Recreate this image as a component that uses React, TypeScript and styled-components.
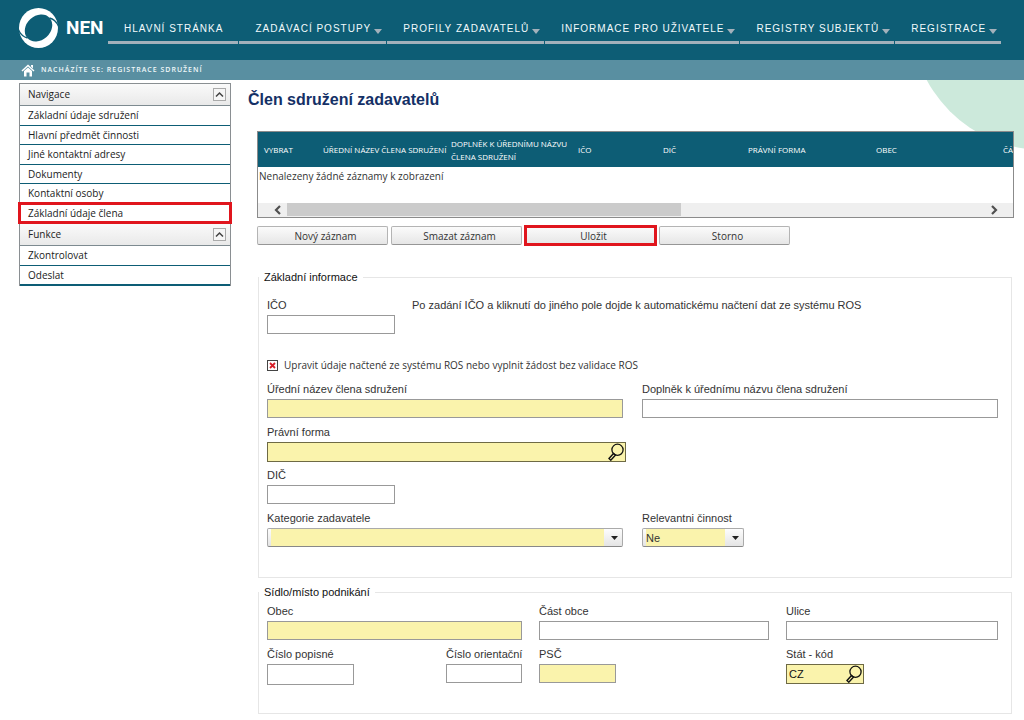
import React from "react";
import styled, { createGlobalStyle, css } from "styled-components";

const TEAL = "#0d5d75";
const RED = "#e0151d";
const ARIAL = '"Liberation Sans", Arial, sans-serif';
const HUMAN = '"Open Sans", "Noto Sans", sans-serif';

const GlobalStyle = createGlobalStyle`
  *, *::before, *::after { box-sizing: border-box; }
  body { margin: 0; background: #fff; color: #333; font: 11px/16px ${ARIAL}; }
  button, input, select { font: inherit; color: inherit; margin: 0; border-radius: 0; }
`;

const Page = styled.div`
  display: flex;
  flex-direction: column;
`;

const Header = styled.header`
  display: flex;
  align-items: flex-start;
  height: 60px;
  padding-left: 18px;
  background: ${TEAL};
`;

const Brand = styled.a`
  display: flex;
  align-items: center;
  gap: 7px;
  width: 90px;
  padding-top: 7px;
  color: #fff;
  font: bold 19px/42px Roboto, sans-serif;
  text-decoration: none;
`;

const Menu = styled.ul`
  display: flex;
  gap: 1px;
  margin: 0;
  padding: 0;
  list-style: none;
`;

const MenuLink = styled.a<{ $plain?: boolean }>`
  display: flex;
  align-items: center;
  gap: 3px;
  height: 44px;
  padding: 17px ${(p) => (p.$plain ? 15 : 4)}px 0 16px;
  border-bottom: 3px solid #a3b1bb;
  color: #f2fafc;
  font-size: 10px;
  letter-spacing: 1px;
  white-space: nowrap;
  text-decoration: none;

  svg { margin-top: 5px; }
`;

const Crumbs = styled.nav`
  display: flex;
  align-items: center;
  gap: 6px;
  height: 20px;
  padding-left: 21px;
  background: #598fa1;
  color: #f0f8fa;
  font: 600 7px/20px ${HUMAN};
  letter-spacing: 1px;
`;

const Content = styled.div`
  position: relative;
  display: flex;
  align-items: flex-start;
  gap: 17px;
  padding: 3px 10px 6px 19px;
  overflow: hidden;
`;

const Bubble = styled.div`
  position: absolute;
  top: -195px;
  right: -152px;
  width: 265px;
  height: 265px;
  border-radius: 50%;
  background: #cce9db;
`;

const Sidebar = styled.aside`
  flex: none;
  width: 212px;
  border: 1px solid #8a8f92;
  border-bottom: 0;
  color: #222;
  font: 10px/18px ${HUMAN};
`;

const PanelHead = styled.h2`
  display: flex;
  align-items: center;
  justify-content: space-between;
  height: 22px;
  margin: 0;
  padding: 0 4px 1px 8px;
  border-bottom: 1px solid #7d8a90;
  background: linear-gradient(#fafafa, #e9e9e9);
  font: inherit;
`;

const Collapse = styled.button`
  display: grid;
  place-items: center;
  width: 13px;
  height: 13px;
  padding: 0;
  border: 1px solid #aaa;
  background: #f6f6f6;
`;

const PanelList = styled.ul<{ $height: number }>`
  display: grid;
  grid-auto-rows: 1fr;
  min-height: ${(p) => p.$height}px;
  margin: 0;
  padding: 0;
  list-style: none;
  border-bottom: 1px solid ${TEAL};
`;

const PanelItem = styled.li`
  display: grid;
  border-bottom: 1px solid ${TEAL};
`;

const PanelLink = styled.a<{ $marked?: boolean }>`
  display: flex;
  align-items: center;
  padding-left: 8px;
  color: inherit;
  text-decoration: none;
  ${(p) => p.$marked && css`outline: 3px solid ${RED}; outline-offset: -1px;`}
`;

const Main = styled.main`
  position: relative;
  flex: 1;
  min-width: 0;
`;

const Title = styled.h1`
  margin: 0 0 21px;
  padding-top: 7px;
  color: #143066;
  font-size: 16px;
  line-height: 20px;
`;

const Body = styled.div`
  margin-left: 9px;
`;

const GridBox = styled.div`
  border: 1px solid #8b8b8b;
  background: #fff;
  overflow: hidden;
`;

const DataTable = styled.table`
  width: 100%;
  min-width: 754px;
  table-layout: fixed;
  border-collapse: collapse;
`;

const HeadCell = styled.th<{ $width?: number }>`
  width: ${(p) => (p.$width ? `${p.$width}px` : "auto")};
  height: 35px;
  padding: 0 0 0 6px;
  background: ${TEAL};
  color: #fff;
  font: 8px/13px ${HUMAN};
  text-align: left;
  white-space: pre;
`;

const EmptyCell = styled.td`
  height: 36px;
  padding: 0 1px;
  vertical-align: top;
  font: 10px/18px ${HUMAN};
`;

const ScrollBar = styled.div`
  display: flex;
  height: 14px;
  padding: 0 9px;
  background: #efefef;
`;

const ScrollButton = styled.button`
  display: grid;
  place-items: center;
  width: 20px;
  padding: 0;
  border: 0;
  background: transparent;
`;

const ScrollTrack = styled.div`
  display: grid;
  flex: 1;
  grid-template-columns: 393fr 302fr;
`;

const ScrollThumb = styled.div`
  height: 13px;
  background: #cbcbcb;
`;

const Actions = styled.div`
  display: flex;
  gap: 3px;
  margin-top: 8px;
`;

const ActionButton = styled.button<{ $marked?: boolean }>`
  width: 131px;
  height: 19px;
  padding: 0 0 0 6px;
  border: 1px solid #b4b4b4;
  border-bottom-color: #969696;
  border-radius: 2px;
  background: linear-gradient(#fbfbfb, #e6e6e6);
  font: 10px/16px ${HUMAN};
  ${(p) => p.$marked && css`
    border-radius: 0;
    outline: 3px solid ${RED};
    outline-offset: -2px;
  `}
`;

const Groups = styled.div`
  display: flex;
  flex-direction: column;
  gap: 6px;
  margin-top: 24px;
`;

const Group = styled.fieldset<{ $top: number; $bottom: number }>`
  min-width: 0;
  margin: 0 2px 0 1px;
  padding: ${(p) => p.$top}px 13px ${(p) => p.$bottom}px 8px;
  border: 1px solid #e6e6e6;
`;

const Legend = styled.legend`
  margin-left: -8px;
  padding: 0 5px;
  color: #111;
`;

const Intro = styled.div`
  display: flex;
  align-items: flex-start;
  gap: 17px;
`;

const Columns = styled.div<{ $cols: string; $gap: number }>`
  display: grid;
  grid-template-columns: ${(p) => p.$cols};
  gap: 6px ${(p) => p.$gap}px;
`;

const Field = styled.div<{ $width?: number; $start?: boolean }>`
  display: flex;
  flex-direction: column;
  gap: 2px;
  width: ${(p) => (p.$width ? `${p.$width}px` : "auto")};
  ${(p) => p.$start && css`grid-column: 1;`}

  label { white-space: nowrap; }
`;

const Split = styled.div`
  display: flex;
  justify-content: space-between;
`;

const fill = (required?: boolean) => (required ? "#faf3ac" : "#fff");

const TextBox = styled.input<{ $required?: boolean; $tall?: boolean }>`
  width: 100%;
  height: ${(p) => (p.$tall ? 21 : 19)}px;
  padding: 0 4px;
  border: 1px solid #999;
  background: ${(p) => fill(p.$required)};
`;

const LookupBox = styled.div<{ $wide?: boolean }>`
  display: flex;
  height: 20px;
  margin: 0 ${(p) => (p.$wide ? -3 : 0)}px -1px 0;
  border: 1px solid #6e6a45;
  background: ${fill(true)};

  input {
    flex: 1;
    min-width: 0;
    padding: 0 2px;
    border: 0;
    background: transparent;
    color: #111;
  }
  button {
    display: grid;
    place-items: center;
    width: 18px;
    padding: 0;
    border: 0;
    background: transparent;
  }
`;

const SelectBox = styled.div`
  display: grid;
  align-items: center;
  border: 1px solid #aaa;
  border-bottom-color: #888;
  border-radius: 2px;
  background: linear-gradient(#fdfdfd, #e4e4e4);

  select, svg { grid-area: 1 / 1; }
  select {
    appearance: none;
    height: 17px;
    margin: 0 18px 0 3px;
    padding: 0;
    border: 0;
    background: ${fill(true)};
  }
  svg { justify-self: end; margin-right: 4px; pointer-events: none; }
`;

const CheckRow = styled.label`
  display: flex;
  align-items: center;
  gap: 6px;
  margin: 23px 0 8px;
  font: 10px/16px ${HUMAN};
`;

const CheckMark = styled.span`
  display: grid;
  place-items: center;

  input, svg { grid-area: 1 / 1; }
  input {
    appearance: none;
    width: 11px;
    height: 11px;
    border: 1px solid #444;
    background: #fff;
  }
  svg { visibility: hidden; pointer-events: none; }
  input:checked + svg { visibility: visible; }
`;

const Hint = styled.p`
  margin: 0;
`;

const Logo = () => (
  <svg width="41" height="42" viewBox="0 0 41 42" aria-hidden="true">
    <ellipse cx="20.500" cy="21" rx="19.500" ry="20" fill="#fff" />
    <ellipse cx="20.500" cy="21" rx="15" ry="12" fill={TEAL} transform="rotate(-42 20.500 21)" />
    <path
      fill="none"
      stroke={TEAL}
      strokeWidth="1.300"
      d="M9.500 31C5.500 30 2.500 27 .5 23M31.500 11C35.500 12 38.500 15 40.500 19"
    />
  </svg>
);

const Home = () => (
  <svg width="14" height="13" viewBox="0 0 14 13" fill="none" aria-hidden="true">
    <path d="M1 7l6-5.500 6 5.500" stroke="#fff" strokeWidth="1.500" />
    <path d="M10 1h2v3.500l-2-2zM3 7l4-3.500 4 3.500v5.500H8.500V8.500h-3v4H3z" fill="#fff" />
  </svg>
);

const MenuArrow = () => (
  <svg width="8" height="5" viewBox="0 0 8 5" aria-hidden="true">
    <path d="M0 0h8L4 5z" fill="#a3b1bb" />
  </svg>
);

const ChevronUp = () => (
  <svg width="9" height="7" viewBox="0 0 9 7" aria-hidden="true">
    <path d="M1 5.500L4.500 2 8 5.500" fill="none" stroke="#444" strokeWidth="1.500" />
  </svg>
);

const ScrollArrow = ({ d }: { d: string }) => (
  <svg width="9" height="10" viewBox="0 0 9 10" aria-hidden="true">
    <path d={d} fill="none" stroke="#505050" strokeWidth="2.200" />
  </svg>
);

const DropArrow = () => (
  <svg width="7" height="4" viewBox="0 0 7 4" aria-hidden="true">
    <path d="M0 0h7L3.500 4z" fill="#222" />
  </svg>
);

const Magnifier = () => (
  <svg width="16" height="18" viewBox="0 0 16 18" fill="none" stroke="#111" aria-hidden="true">
    <circle cx="9.500" cy="6.800" r="5.600" strokeWidth="1.300" />
    <path d="M5.500 10.500L1 15.500l1.800 1.700L7.500 12z" strokeWidth="1.400" />
  </svg>
);

const menu = [
  { text: "HLAVNÍ STRÁNKA", sub: false },
  { text: "ZADÁVACÍ POSTUPY", sub: true },
  { text: "PROFILY ZADAVATELŮ", sub: true },
  { text: "INFORMACE PRO UŽIVATELE", sub: true },
  { text: "REGISTRY SUBJEKTŮ", sub: true },
  { text: "REGISTRACE", sub: true },
];

const panels = [
  {
    title: "Navigace",
    height: 118,
    items: [
      "Základní údaje sdružení",
      "Hlavní předmět činnosti",
      "Jiné kontaktní adresy",
      "Dokumenty",
      "Kontaktní osoby",
      "Základní údaje člena",
    ],
  },
  { title: "Funkce", height: 40, items: ["Zkontrolovat", "Odeslat"] },
];

const columns = [
  { text: "VYBRAT", width: 59 },
  { text: "ÚŘEDNÍ NÁZEV ČLENA SDRUŽENÍ", width: 128 },
  { text: "DOPLNĚK K ÚŘEDNÍMU NÁZVU\nČLENA SDRUŽENÍ", width: 127 },
  { text: "IČO", width: 85 },
  { text: "DIČ", width: 85 },
  { text: "PRÁVNÍ FORMA", width: 128 },
  { text: "OBEC", width: 127 },
  { text: "ČÁ" },
];

const LabeledText = ({ id, label, width, required, tall }: {
  id: string; label: string; width?: number; required?: boolean; tall?: boolean;
}) => (
  <Field $width={width}>
    <label htmlFor={id}>{label}</label>
    <TextBox id={id} $required={required} $tall={tall} />
  </Field>
);

const Lookup = ({ id, label, width, value, wide }: {
  id: string; label: string; width?: number; value?: string; wide?: boolean;
}) => (
  <Field $width={width} $start={wide}>
    <label htmlFor={id}>{label}</label>
    <LookupBox $wide={wide}>
      <input id={id} defaultValue={value} />
      <button type="button" aria-label={label}><Magnifier /></button>
    </LookupBox>
  </Field>
);

const Choice = ({ id, label, width, options }: {
  id: string; label: string; width?: number; options: string[];
}) => (
  <Field $width={width}>
    <label htmlFor={id}>{label}</label>
    <SelectBox>
      <select id={id}>
        {options.map((o) => <option key={o}>{o}</option>)}
      </select>
      <DropArrow />
    </SelectBox>
  </Field>
);

export default function App() {
  return (
    <Page>
      <GlobalStyle />
      <Header>
        <Brand href="#"><Logo />NEN</Brand>
        <nav>
          <Menu>
            {menu.map(({ text, sub }) => (
              <li key={text}>
                <MenuLink href="#" $plain={!sub}>{text}{sub && <MenuArrow />}</MenuLink>
              </li>
            ))}
          </Menu>
        </nav>
      </Header>
      <Crumbs><Home />NACHÁZÍTE SE: REGISTRACE SDRUŽENÍ</Crumbs>
      <Content>
        <Bubble />
        <Sidebar>
          {panels.map((panel) => (
            <section key={panel.title}>
              <PanelHead>
                {panel.title}
                <Collapse type="button" aria-label={panel.title}><ChevronUp /></Collapse>
              </PanelHead>
              <PanelList $height={panel.height}>
                {panel.items.map((item) => (
                  <PanelItem key={item}>
                    <PanelLink href="#" $marked={item === "Základní údaje člena"}>{item}</PanelLink>
                  </PanelItem>
                ))}
              </PanelList>
            </section>
          ))}
        </Sidebar>
        <Main>
          <Title>Člen sdružení zadavatelů</Title>
          <Body>
            <GridBox>
              <DataTable>
                <thead>
                  <tr>
                    {columns.map((c) => (
                      <HeadCell key={c.text} $width={c.width}>{c.text}</HeadCell>
                    ))}
                  </tr>
                </thead>
                <tbody>
                  <tr>
                    <EmptyCell colSpan={columns.length}>Nenalezeny žádné záznamy k zobrazení</EmptyCell>
                  </tr>
                </tbody>
              </DataTable>
              <ScrollBar>
                <ScrollButton type="button" aria-label="Doleva"><ScrollArrow d="M7 1L3 5l4 4" /></ScrollButton>
                <ScrollTrack><ScrollThumb /></ScrollTrack>
                <ScrollButton type="button" aria-label="Doprava"><ScrollArrow d="M2 1l4 4-4 4" /></ScrollButton>
              </ScrollBar>
            </GridBox>
            <Actions>
              <ActionButton type="button">Nový záznam</ActionButton>
              <ActionButton type="button">Smazat záznam</ActionButton>
              <ActionButton type="button" $marked>Uložit</ActionButton>
              <ActionButton type="button">Storno</ActionButton>
            </Actions>
            <Groups>
              <Group $top={12} $bottom={30}>
                <Legend>Základní informace</Legend>
                <Intro>
                  <LabeledText id="ico" label="IČO" width={128} />
                  <Hint>Po zadání IČO a kliknutí do jiného pole dojde k automatickému načtení dat ze systému ROS</Hint>
                </Intro>
                <CheckRow>
                  <CheckMark>
                    <input type="checkbox" defaultChecked />
                    <svg width="7" height="7" viewBox="0 0 7 7"><path d="M1 1l5 5M6 1L1 6" stroke="#d8202a" strokeWidth="1.800" /></svg>
                  </CheckMark>
                  Upravit údaje načtené ze systému ROS nebo vyplnit žádost bez validace ROS
                </CheckRow>
                <Columns $cols="1fr 1fr" $gap={19}>
                  <LabeledText id="nazev" label="Úřední název člena sdružení" required />
                  <LabeledText id="doplnek" label="Doplněk k úřednímu názvu člena sdružení" />
                  <Lookup id="forma" label="Právní forma" wide />
                  <Field $start $width={128}>
                    <label htmlFor="dic">DIČ</label>
                    <TextBox id="dic" />
                  </Field>
                  <span />
                  <Choice id="kategorie" label="Kategorie zadavatele" options={[""]} />
                  <Choice id="cinnost" label="Relevantni činnost" width={102} options={["Ne", "Ano"]} />
                </Columns>
              </Group>
              <Group $top={3} $bottom={28}>
                <Legend>Sídlo/místo podnikání</Legend>
                <Columns $cols="255fr 230fr 212fr" $gap={17}>
                  <LabeledText id="obec" label="Obec" required />
                  <LabeledText id="cast" label="Část obce" />
                  <LabeledText id="ulice" label="Ulice" />
                  <Split>
                    <LabeledText id="popisne" label="Číslo popisné" width={87} tall />
                    <LabeledText id="orientacni" label="Číslo orientační" width={76} />
                  </Split>
                  <LabeledText id="psc" label="PSČ" width={77} required />
                  <Lookup id="stat" label="Stát - kód" width={78} value="CZ" />
                </Columns>
              </Group>
            </Groups>
          </Body>
        </Main>
      </Content>
    </Page>
  );
}
